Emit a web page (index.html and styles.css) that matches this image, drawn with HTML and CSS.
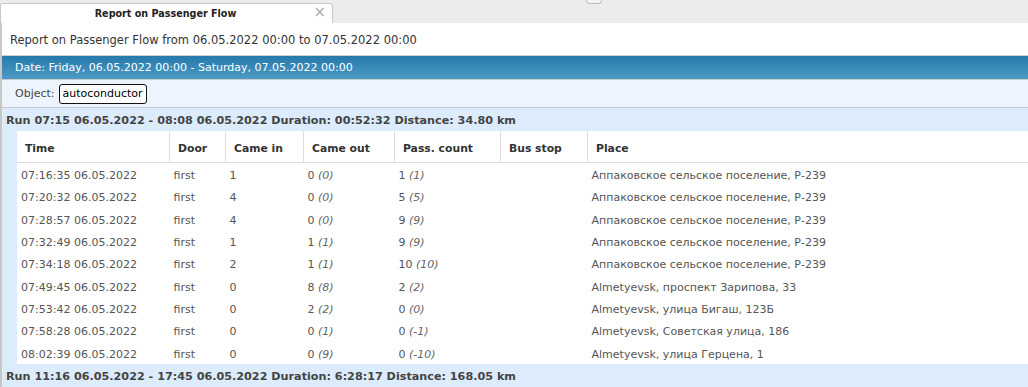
FILE: index.html
```html
<!DOCTYPE html>
<html>
<head>
  <title>Report on Passenger Flow</title>
  <link rel="stylesheet" href="styles.css">
</head>
<body>
  <div class="tabbar">
    <div class="tab">
      <span class="tab-title">Report on Passenger Flow</span>
      <span class="tab-close">×</span>
    </div>
    <div class="handle"></div>
  </div>

  <div class="page">
    <div class="report-title">Report on Passenger Flow from 06.05.2022 00:00 to 07.05.2022 00:00</div>
    <div class="date-bar">Date: Friday, 06.05.2022 00:00 - Saturday, 07.05.2022 00:00</div>
    <div class="object-row">Object: <span class="object-box">autoconductor</span></div>

    <div class="run">Run 07:15 06.05.2022 - 08:08 06.05.2022 Duration: 00:52:32 Distance: 34.80 km</div>
    <div class="run-body">
      <table class="flow">
        <thead>
          <tr>
            <th class="c-time">Time</th>
            <th class="c-door">Door</th>
            <th class="c-in">Came in</th>
            <th class="c-out">Came out</th>
            <th class="c-count">Pass. count</th>
            <th class="c-stop">Bus stop</th>
            <th>Place</th>
          </tr>
        </thead>
        <tbody id="rows"></tbody>
      </table>
    </div>

    <div class="run">Run 11:16 06.05.2022 - 17:45 06.05.2022 Duration: 6:28:17 Distance: 168.05 km</div>
  </div>

  <script>
    const rows = [
      ['07:16:35 06.05.2022', 'first', '1', '0', '0', '1', '1', 'Аппаковское сельское поселение, Р-239'],
      ['07:20:32 06.05.2022', 'first', '4', '0', '0', '5', '5', 'Аппаковское сельское поселение, Р-239'],
      ['07:28:57 06.05.2022', 'first', '4', '0', '0', '9', '9', 'Аппаковское сельское поселение, Р-239'],
      ['07:32:49 06.05.2022', 'first', '1', '1', '1', '9', '9', 'Аппаковское сельское поселение, Р-239'],
      ['07:34:18 06.05.2022', 'first', '2', '1', '1', '10', '10', 'Аппаковское сельское поселение, Р-239'],
      ['07:49:45 06.05.2022', 'first', '0', '8', '8', '2', '2', 'Almetyevsk, проспект Зарипова, 33'],
      ['07:53:42 06.05.2022', 'first', '0', '2', '2', '0', '0', 'Almetyevsk, улица Бигаш, 123Б'],
      ['07:58:28 06.05.2022', 'first', '0', '0', '1', '0', '-1', 'Almetyevsk, Советская улица, 186'],
      ['08:02:39 06.05.2022', 'first', '0', '0', '9', '0', '-10', 'Almetyevsk, улица Герцена, 1']
    ];

    const tbody = document.getElementById('rows');
    rows.forEach(r => {
      const tr = document.createElement('tr');
      tr.innerHTML = `
        <td>${r[0]}</td>
        <td>${r[1]}</td>
        <td>${r[2]}</td>
        <td>${r[3]} <i>(${r[4]})</i></td>
        <td>${r[5]} <i>(${r[6]})</i></td>
        <td></td>
        <td>${r[7]}</td>
      `;
      tbody.appendChild(tr);
    });
  </script>
</body>
</html>
```

FILE: styles.css
```css
body {
  margin: 0;
  font-family: "DejaVu Sans", Verdana, sans-serif;
  color: #333;
  background: #fff;
  overflow: hidden;
}
.tabbar {
  height: 23px;
  background: #ececec;
  position: relative;
  display: flex;
  align-items: flex-end;
}
.tab {
  width: 331px;
  height: 19px;
  background: #fff;
  border: 1px solid #c8c8c8;
  border-bottom: none;
  border-radius: 3px 3px 0 0;
  position: relative;
  display: flex;
  align-items: center;
  justify-content: center;
}
.tab-title {
  font-size: 9.6px;
  font-weight: bold;
  color: #222;
  margin-left: -2px;
}
.tab-close {
  position: absolute;
  right: 6px;
  top: 0;
  font-size: 15px;
  color: #aaa;
  line-height: 16px;
}
.handle {
  position: absolute;
  left: 586px;
  top: 0;
  width: 14px;
  height: 3px;
  border: 1px solid #bbb;
  border-top: none;
  border-radius: 0 0 5px 5px;
  background: #f4f4f4;
}
.page {
  border-left: 2px solid #c8c8c8;
}
.report-title {
  height: 30px;
  padding-top: 2px;
  line-height: 30px;
  padding-left: 8px;
  font-size: 11.5px;
  color: #333;
  border-bottom: 1px solid #d0d0d0;
}
.date-bar {
  height: 22px;
  padding-top: 1px;
  line-height: 22px;
  padding-left: 13px;
  font-size: 11px;
  color: #fff;
  background: linear-gradient(#2579ab, #4d9bc5);
  border-bottom: 1px solid #c9c9c9;
}
.object-row {
  height: 27px;
  display: flex;
  align-items: center;
  gap: 4px;
  padding-left: 13px;
  font-size: 11px;
  color: #444;
  background: #edf4fd;
  border-bottom: 1px solid #c9c9c9;
}
.object-box {
  border: 1px solid #111;
  border-radius: 3px;
  background: #fff;
  color: #000;
  padding: 2px 3px;
  line-height: 14px;
}
.run {
  height: 21px;
  padding-top: 2px;
  line-height: 21px;
  padding-left: 4px;
  font-size: 11.2px;
  font-weight: bold;
  color: #444;
  background: #dcecfc;
}
.run-body {
  background: #dcecfc;
  padding-left: 15px;
}
.flow {
  width: 100%;
  border-collapse: collapse;
  background: #fff;
  font-size: 11px;
  color: #555;
}
.flow th {
  height: 28px;
  padding: 3px 8px 0;
  text-align: left;
  font-size: 10.8px;
  font-weight: bold;
  color: #333;
  border-left: 1px solid #ddd;
  border-bottom: 1px solid #ddd;
}
.flow th:first-child {
  border-left: none;
}
.flow td {
  height: 19.3px;
  padding: 3px 4px 0;
  white-space: nowrap;
}
.flow td i {
  color: #666;
}
.c-time { width: 136px; }
.c-door { width: 39px; }
.c-in { width: 61px; }
.c-out { width: 74px; }
.c-count { width: 89px; }
.c-stop { width: 70px; }
```
